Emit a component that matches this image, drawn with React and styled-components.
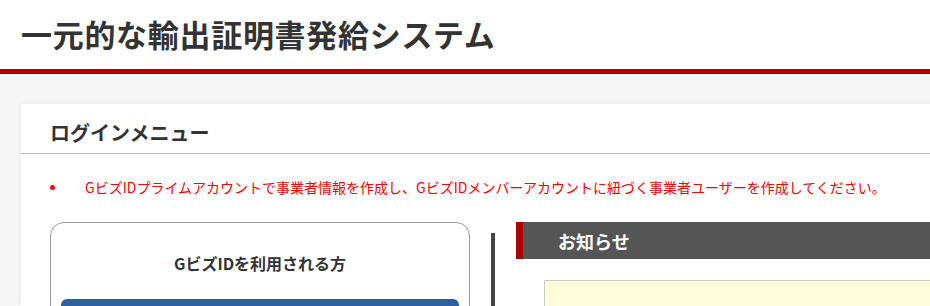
import React from 'react';
import styled, { createGlobalStyle } from 'styled-components';

const GlobalStyle = createGlobalStyle`
  html, body {
    margin: 0;
    padding: 0;
    background: #f7f7f7;
    font-family: "Noto Sans CJK JP", "Noto Sans", sans-serif;
    color: #333;
    overflow: hidden;
  }
`;

const Header = styled.header`
  background: #fff;
  height: 69px;
  border-bottom: 5px solid #b00000;
  display: flex;
  align-items: center;
  padding-left: 21px;
`;

const SiteTitle = styled.h1`
  margin: 0;
  font-size: 31px;
  font-weight: 700;
  color: #333;
  letter-spacing: 0.7px;
  line-height: 1;
  position: relative;
  top: -1px;
`;

const Main = styled.main`
  padding: 30px 0 0 21px;
`;

const Card = styled.section`
  background: #fff;
  box-shadow: 0 0 6px rgba(0, 0, 0, 0.08);
  width: 940px;
  height: 202px;
  overflow: hidden;
`;

const CardTitle = styled.h2`
  margin: 0;
  font-size: 20px;
  font-weight: 700;
  color: #333;
  line-height: 1;
  padding: 19px 0 10px 29px;
  border-bottom: 1px solid #bbb;
`;

const NoticeList = styled.ul`
  margin: 0;
  padding: 24px 0 0 29px;
  list-style: none;
`;

const NoticeItem = styled.li`
  display: flex;
  align-items: center;
  font-size: 14px;
  color: #ff0000;
  line-height: 18px;

  &::before {
    content: '';
    width: 5px;
    height: 5px;
    border-radius: 50%;
    background: #ff0000;
    margin-right: 30px;
    flex-shrink: 0;
  }
`;

const Columns = styled.div`
  display: flex;
  padding: 26px 0 0 29px;
`;

const LoginBox = styled.div`
  width: 420px;
  height: 120px;
  box-sizing: border-box;
  border: 1px solid #999;
  border-radius: 14px;
  padding: 30px 10px 0;
  flex-shrink: 0;
`;

const LoginHeading = styled.div`
  text-align: center;
  font-size: 16px;
  font-weight: 700;
  color: #333;
  line-height: 20px;
`;

const LoginButton = styled.div`
  margin-top: 26px;
  height: 40px;
  background: #2e5f9f;
  border-radius: 6px;
`;

const Separator = styled.div`
  width: 4px;
  background: #444;
  margin: 11px 21px 0;
  height: 100px;
  flex-shrink: 0;
`;

const NewsColumn = styled.div`
  flex: 1;
`;

const NewsHeader = styled.div`
  height: 37px;
  background: #555;
  border-left: 7px solid #b00000;
  display: flex;
  align-items: center;
  padding-left: 35px;
  color: #fff;
  font-size: 18px;
  font-weight: 700;
`;

const NewsBody = styled.div`
  margin: 21px 0 0 28px;
  height: 60px;
  background: #fffcd9;
  border: 1px solid #ccc;
`;

export default function App() {
  return (
    <>
      <GlobalStyle />
      <Header>
        <SiteTitle>一元的な輸出証明書発給システム</SiteTitle>
      </Header>
      <Main>
        <Card>
          <CardTitle>ログインメニュー</CardTitle>
          <NoticeList>
            <NoticeItem>
              GビズIDプライムアカウントで事業者情報を作成し、GビズIDメンバーアカウントに紐づく事業者ユーザーを作成してください。
            </NoticeItem>
          </NoticeList>
          <Columns>
            <LoginBox>
              <LoginHeading>GビズIDを利用される方</LoginHeading>
              <LoginButton />
            </LoginBox>
            <Separator />
            <NewsColumn>
              <NewsHeader>お知らせ</NewsHeader>
              <NewsBody />
            </NewsColumn>
          </Columns>
        </Card>
      </Main>
    </>
  );
}
